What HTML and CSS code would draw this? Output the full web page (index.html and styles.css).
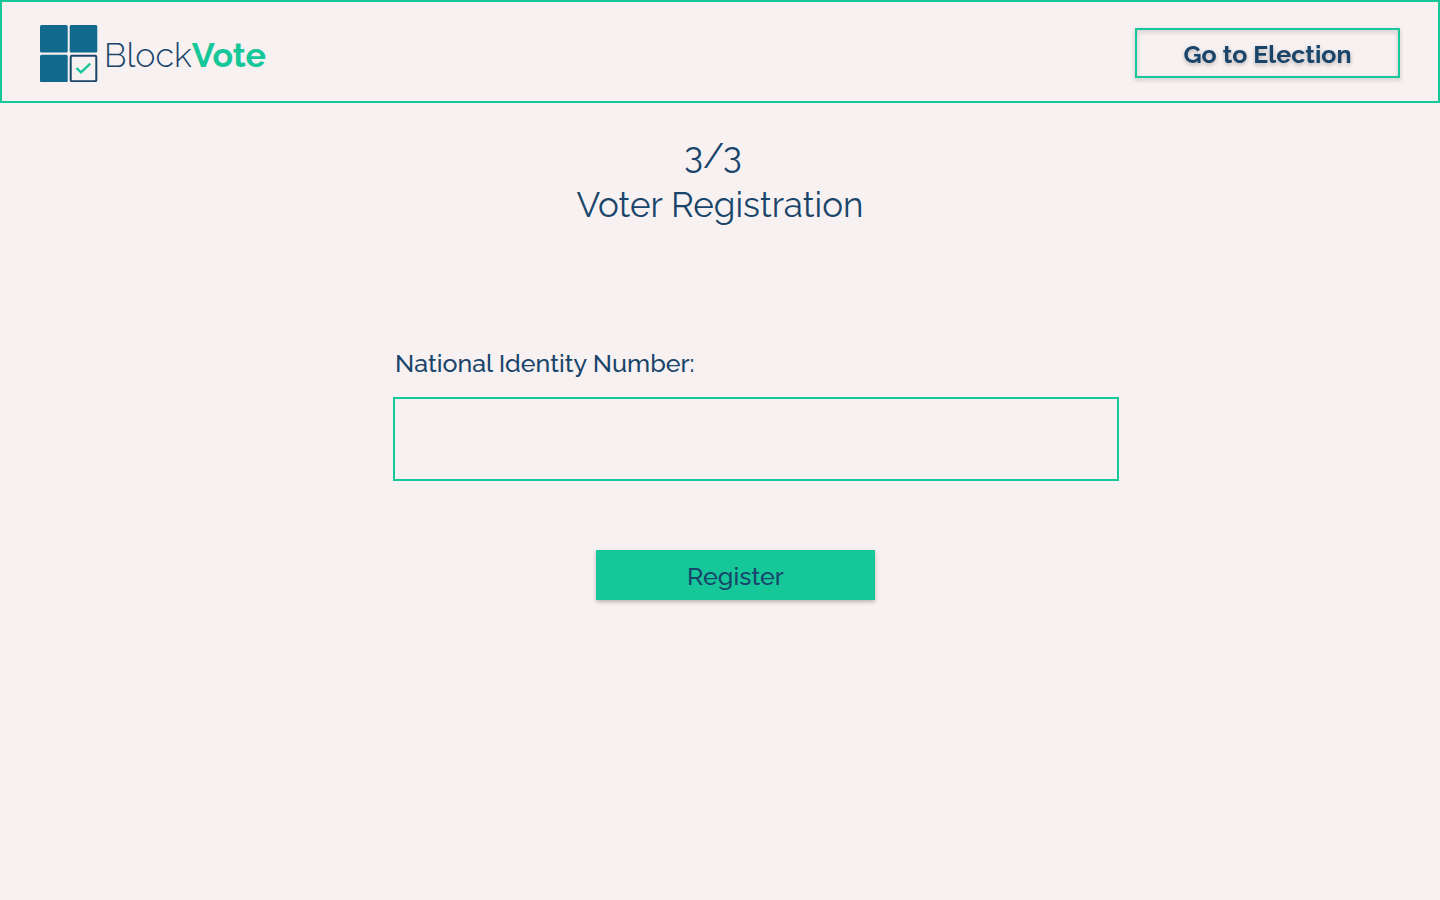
FILE: index.html
```html
<!DOCTYPE html>
<html lang="en">
<head>
<meta charset="utf-8">
<meta name="viewport" content="width=device-width, initial-scale=1">
<title>BlockVote – Voter Registration</title>
<link rel="stylesheet" href="styles.css">
</head>
<body>
<header class="topbar">
  <a class="brand" href="#">
    <svg class="brand-mark" viewBox="0 -1 58 58" aria-hidden="true">
      <g fill="#11698e">
        <rect x="0" y="0" width="27.7" height="27.5" rx="1.5"/>
        <rect x="29.7" y="0" width="27.6" height="27.5" rx="1.5"/>
        <rect x="0" y="29.7" width="27.7" height="27.5" rx="1.5"/>
      </g>
      <rect x="30.7" y="30.7" width="25.6" height="25.5" rx="1.2" fill="none" stroke="#19456b" stroke-width="2"/>
      <path d="M36.5 43 L41 47.3 L50.3 38.6" fill="none" stroke="#16c79a" stroke-width="2.4"/>
    </svg>
    <span class="brand-name">Block<strong class="brand-accent">Vote</strong></span>
  </a>
  <button class="btn btn-outline" type="button">Go to Election</button>
</header>
<main class="page">
  <div class="heading">
    <p class="step">3/3</p>
    <h1 class="title">Voter Registration</h1>
  </div>
  <form class="form">
    <label class="label" for="nin">National Identity Number:</label>
    <input class="field" id="nin" name="nin" type="text">
    <button class="btn btn-solid" type="submit">Register</button>
  </form>
</main>
</body>
</html>
```
FILE: styles.css
```css
:root {
  --green: #16c79a;
  --navy: #19456b;
  --paper: #f8f1f1;
}

* {
  box-sizing: border-box;
}

body {
  margin: 0;
  background: var(--paper);
  color: var(--navy);
  font-family: Raleway, Lato, sans-serif;
}

.topbar {
  display: flex;
  align-items: center;
  justify-content: space-between;
  padding: 22px 38px 19px;
  border: 2px solid var(--green);
}

.brand {
  display: flex;
  align-items: center;
  gap: 6px;
  color: inherit;
  text-decoration: none;
}

.brand-mark {
  width: 58px;
  height: 58px;
}

.brand-name {
  padding-top: 4px;
  font-size: 34px;
  font-weight: 300;
  line-height: 48px;
}

.brand-accent {
  color: var(--green);
  font-weight: 700;
}

.btn {
  height: 50px;
  padding: 2px 0 0;
  border: 0;
  color: var(--navy);
  font-family: inherit;
  font-size: 25px;
  font-weight: 500;
  cursor: pointer;
}

.btn-outline {
  width: 265px;
  border: 2px solid var(--green);
  background: transparent;
  font-weight: 700;
  filter: drop-shadow(0 2px 2px rgba(0, 0, 0, 0.25));
}

.btn-solid {
  width: 279px;
  margin: 69px 0 0 203px;
  background: var(--green);
  box-shadow: 0 2px 4px rgba(0, 0, 0, 0.25);
}

.page {
  padding: 28px 24px;
}

.heading {
  text-align: center;
  font-size: 35px;
  line-height: 49px;
}

.step {
  margin: 0;
  padding-right: 14px;
}

.title {
  margin: 0;
  font-size: inherit;
  font-weight: 400;
}

.form {
  max-width: 798px;
  margin: 118px auto 0;
  padding-left: 72px;
}

.label {
  display: block;
  padding-left: 2px;
  font-size: 25px;
  font-weight: 500;
  line-height: 32px;
}

.field {
  display: block;
  width: 100%;
  height: 84px;
  margin-top: 18px;
  padding: 0 20px;
  border: 2px solid var(--green);
  border-radius: 0;
  background: transparent;
  color: inherit;
  font: inherit;
  font-size: 25px;
}
```
